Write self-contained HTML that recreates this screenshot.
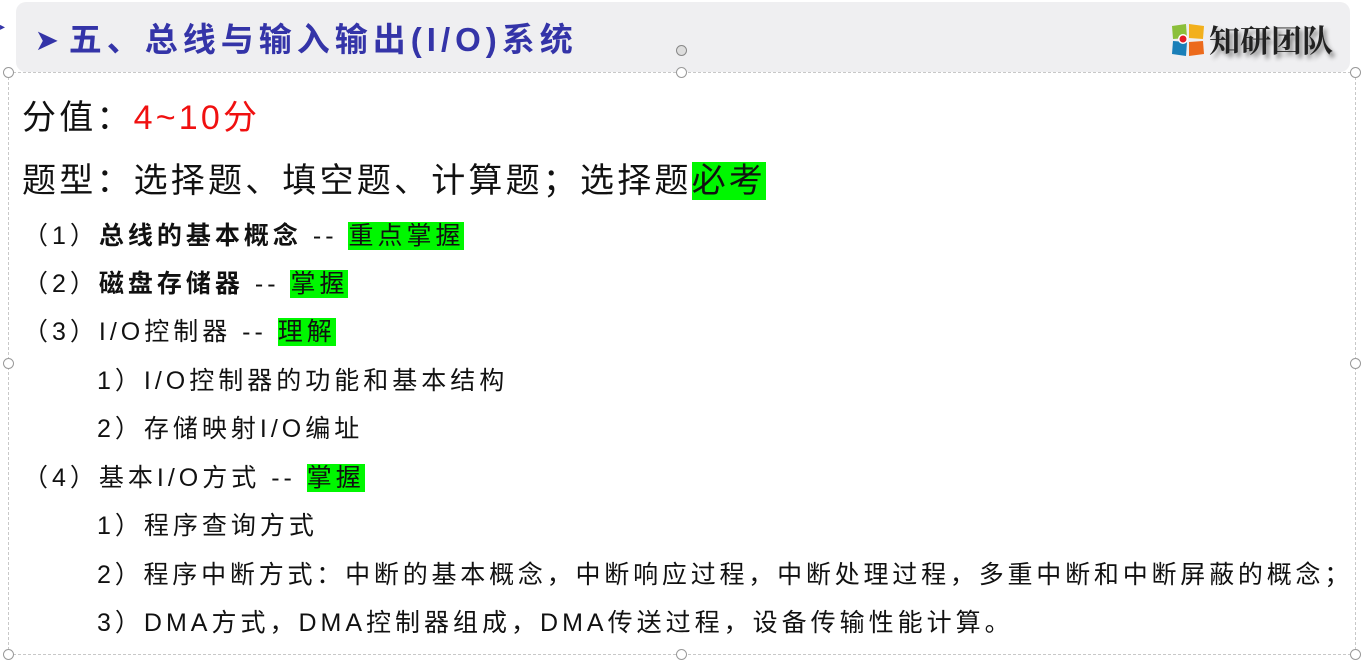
<!DOCTYPE html>
<html><head><meta charset="utf-8"><style>
*{margin:0;padding:0;box-sizing:border-box}
body{width:1362px;height:663px;background:#fff;position:relative;overflow:hidden;font-family:"Liberation Sans","Noto Sans CJK SC",sans-serif;color:#111}
.hdr{position:absolute;left:16px;top:2px;width:1334px;height:70px;background:#efeff1;border-radius:10px}
.title{position:absolute;left:36px;top:13px;font-size:33px;font-weight:bold;color:#3434a8;letter-spacing:5px;white-space:nowrap}
.box{position:absolute;left:8px;top:72px;width:1348px;height:583px;border:1px dashed #c8c8c8}
.h{position:absolute;width:11px;height:11px;border:1px solid #999;border-radius:50%;background:#fff}
.l{position:absolute;white-space:nowrap}
.big{font-size:34px;letter-spacing:3.2px}
.it{font-size:25px;letter-spacing:4px}
.g{background:#00f700}
.logo{position:absolute;left:1170px;top:16px;font-size:31px;font-weight:bold;color:#222;text-shadow:3px 4px 4px #888;font-family:"Noto Serif CJK SC","Noto Sans CJK SC",serif;white-space:nowrap}
</style></head><body>
<div class="hdr"></div>
<div class="title"><span style="font-size:26px;position:relative;top:-2px;margin-right:6px">➤</span>五、总线与输入输出(I/O)系统</div>
<div style="position:absolute;left:0;top:22px;width:6px;height:8px;color:#3434a8;font-size:10px">▸</div>
<div class="logo"><svg width="36" height="36" viewBox="0 0 36 36" style="vertical-align:-6px;margin-right:3px">
<path d="M2 4 L16 2 L17 16 L3 17Z" fill="#8bbf3a"/><path d="M19 2 L34 4 L33 17 L19 16Z" fill="#f2b01c"/>
<path d="M3 19 L17 20 L16 34 L2 32Z" fill="#1a7fb8"/><path d="M19 20 L33 19 L34 32 L19 34Z" fill="#ec6a1c"/>
<circle cx="13" cy="17" r="5" fill="#fff"/><circle cx="13" cy="17" r="3.5" fill="#e31b23"/></svg>知研团队</div>
<div class="box"></div>
<div class="h" style="left:3px;top:67px"></div>
<div class="h" style="left:676px;top:67px"></div>
<div class="h" style="left:1350px;top:67px"></div>
<div class="h" style="left:3px;top:358px"></div>
<div class="h" style="left:1350px;top:358px"></div>
<div class="h" style="left:3px;top:649px"></div>
<div class="h" style="left:676px;top:649px"></div>
<div class="h" style="left:1350px;top:649px"></div>
<div class="h" style="left:676px;top:45px;border-color:#888;background:#ddd"></div>
<div class="l big" style="left:22px;top:90px">分值：<span style="color:#f01010">4~10分</span></div>
<div class="l big" style="left:22px;top:153px">题型：选择题、填空题、计算题；选择题<span class="g">必考</span></div>
<div class="l it" style="left:23px;top:216px">（1）<b>总线的基本概念</b> -- <span class="g">重点掌握</span></div>
<div class="l it" style="left:23px;top:264px">（2）<b>磁盘存储器</b> -- <span class="g">掌握</span></div>
<div class="l it" style="left:23px;top:312px">（3）I/O控制器 -- <span class="g">理解</span></div>
<div class="l it" style="left:97px;top:361px">1）I/O控制器的功能和基本结构</div>
<div class="l it" style="left:97px;top:409px">2）存储映射I/O编址</div>
<div class="l it" style="left:23px;top:458px">（4）基本I/O方式 -- <span class="g">掌握</span></div>
<div class="l it" style="left:97px;top:506px">1）程序查询方式</div>
<div class="l it" style="left:97px;top:555px;letter-spacing:3.8px">2）程序中断方式：中断的基本概念，中断响应过程，中断处理过程，多重中断和中断屏蔽的概念；</div>
<div class="l it" style="left:97px;top:603px">3）DMA方式，DMA控制器组成，DMA传送过程，设备传输性能计算。</div>
</body></html>
